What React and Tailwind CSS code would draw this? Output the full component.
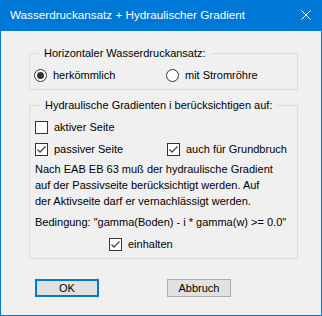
import React from "react";

function Radio({ checked }) {
  return (
    <span className="w-[13px] h-[13px] rounded-full border border-[#333333] bg-white flex items-center justify-center shrink-0">
      {checked && <span className="w-[7px] h-[7px] rounded-full bg-[#333333]" />}
    </span>
  );
}

function Check({ checked }) {
  return (
    <span className="w-[13px] h-[13px] border border-[#333333] bg-white shrink-0 flex items-center justify-center">
      {checked && (
        <svg width="11" height="11" viewBox="0 0 11 11">
          <polyline points="1.5,5.5 4,8 9.5,2.5" fill="none" stroke="#444444" strokeWidth="1.3" />
        </svg>
      )}
    </span>
  );
}

export default function App() {
  return (
    <div className="w-[322px] h-[316px] bg-[#0078d7] px-[1px] pb-[1px] flex flex-col font-['Liberation_Sans',Arial,sans-serif] text-[11px] text-black">
      <div className="h-[30px] flex items-center justify-between pl-[9px] pr-[10px] shrink-0">
        <span className="text-white text-[11.7px] font-['Liberation_Sans',Arial,sans-serif] leading-none">
          Wasserdruckansatz + Hydraulischer Gradient
        </span>
        <svg width="10" height="10" viewBox="0 0 10 10">
          <path d="M0.5 0.5 L9.5 9.5 M9.5 0.5 L0.5 9.5" stroke="white" strokeWidth="1" />
        </svg>
      </div>
      <div className="flex-1 bg-[#f0f0f0] px-[28px] flex flex-col mt-[1px]">
        <fieldset className="w-[269px] mt-[15px] border border-[#dcdcdc] pl-[4px] pt-[8px] pb-[7px]">
          <legend className="ml-[5px] px-[5px] leading-[14px]">Horizontaler Wasserdruckansatz:</legend>
          <div className="flex h-[14px] items-center">
            <div className="w-[132px] flex items-center gap-[6px]">
              <Radio checked />
              <span>herkömmlich</span>
            </div>
            <div className="flex items-center gap-[6px]">
              <Radio />
              <span>mit Stromröhre</span>
            </div>
          </div>
        </fieldset>
        <fieldset className="w-[269px] mt-[8px] border border-[#dcdcdc] pl-[5px] pt-[9px] pb-[7px]">
          <legend className="ml-[5px] px-[5px] leading-[14px]">Hydraulische Gradienten i berücksichtigen auf:</legend>
          <div className="flex h-[13px] items-center gap-[6px]">
            <Check />
            <span>aktiver Seite</span>
          </div>
          <div className="flex h-[13px] items-center mt-[9px]">
            <div className="w-[132px] flex items-center gap-[6px]">
              <Check checked />
              <span>passiver Seite</span>
            </div>
            <div className="flex items-center gap-[6px]">
              <Check checked />
              <span>auch für Grundbruch</span>
            </div>
          </div>
          <p className="mt-[5px] leading-[16px]">
            Nach EAB EB 63 muß der hydraulische Gradient
            <br />
            auf der Passivseite berücksichtigt werden. Auf
            <br />
            der Aktivseite darf er vernachlässigt werden.
          </p>
          <p className="mt-[5px] leading-[16px]">Bedingung: "gamma(Boden) - i * gamma(w) &gt;= 0.0"</p>
          <div className="flex h-[13px] items-center gap-[6px] mt-[8px] ml-[74px]">
            <Check checked />
            <span>einhalten</span>
          </div>
        </fieldset>
        <div className="flex mt-[20px] ml-[6px] gap-[68px]">
          <button className="w-[64px] h-[18px] border-2 border-[#0078d7] bg-[#e1e1e1] flex items-center justify-center leading-none">
            OK
          </button>
          <button className="w-[64px] h-[18px] border border-[#adadad] bg-[#e1e1e1] flex items-center justify-center leading-none">
            Abbruch
          </button>
        </div>
      </div>
    </div>
  );
}
